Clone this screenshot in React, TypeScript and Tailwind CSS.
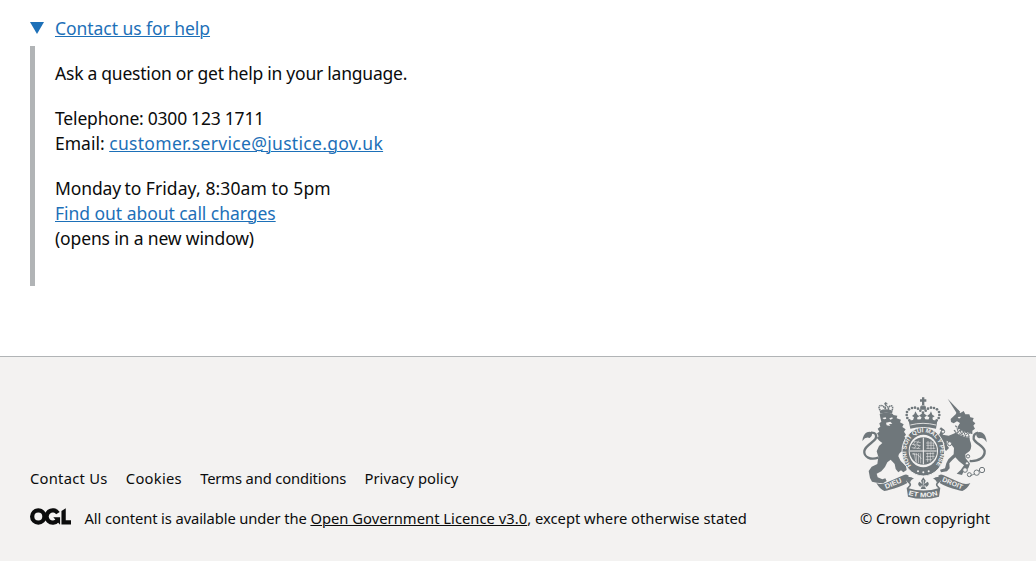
const INK = "#6f777b";
const PAPER = "#f3f2f1";

function OglLogo() {
  return (
    <svg className="mt-px mr-[13.5px] h-[17px] w-[41px] shrink-0" viewBox="0 0 483.2 195.7" aria-hidden="true">
      <circle cx="97.8" cy="97.8" r="72.4" fill="none" stroke="#0b0c0c" strokeWidth="50.7" />
      <path d="M329 59A72.4 72.4 0 1 0 326 141" fill="none" stroke="#0b0c0c" strokeWidth="50.7" />
      <path d="M274.5 105.5h80v87.8h-3zM370.8 32.4 421.5 .1V142.8h61.7v50.7H370.8z" fill="#0b0c0c" />
    </svg>
  );
}

const pearls: [number, number][] = [
  [157, 82], [151, 75], [149, 66], [150, 57], [156, 49], [165, 45], [174, 44], [183, 47], [190, 53],
  [239, 82], [245, 75], [247, 66], [246, 57], [240, 49], [231, 45], [222, 44], [213, 47], [206, 53],
  [198, 59], [198, 67], [198, 75],
];

function CoatOfArms() {
  return (
    <svg className="mr-[5px] h-[102px] w-[125px] translate-x-[2px]" viewBox="15 12 375 306" fill={INK} aria-hidden="true">
      <defs>
        <path id="garter" d="M163 217A51 58 0 1 1 235 217" />
        <path id="scroll" d="M154 305Q199 320 246 305" />
      </defs>

      {/* lion */}
      <path d="M70 62 68 53Q87 45 107 53L105 62Q87 56 70 62z" />
      <path d="M70 52C60 40 71 32 80 41L86 48C82 36 91 33 94 47C99 32 112 38 105 52M86 28V36M82 32H91" fill="none" stroke={INK} strokeWidth="4.5" strokeDasharray="5 1.5" />
      <path d="M68 63Q87 56 108 63L109 66 121 68 119 76 132 80 129 88 140 94 136 102 146 109 141 116 147 125 142 131 150 139 163 144 163 156 151 162 140 157 139 174Q125 178 124 190L131 204 147 220 149 231 139 238 132 232 124 238 116 228 113 213 101 200 91 208Q85 225 73 235L59 242 62 253 76 259 85 256 89 264 78 271 59 269 45 266 39 255 35 234 44 221 61 213 64 191 59 175 66 159 76 150 67 143 59 134 65 130 60 121 67 116 62 107 70 101 67 91 73 86 70 74z" />
      <path d="M76 75 86 73 88 77 81 79zM97 76 106 73 107 77 100 80zM87 89 100 86 106 92 96 94 100 99 89 97z" fill={PAPER} />
      <path d="M42 119Q62 118 56 137C48 150 26 156 22 174C20 192 40 202 64 194" fill="none" stroke={INK} strokeWidth="7" />
      <path d="M46 119Q46 130 38 135Q26 130 16 144Q18 124 30 118Q38 114 46 119z" />

      {/* unicorn */}
      <path d="M272 17 310 57 301 64z" />
      <path d="M303 51 309 61 320 54 325 64 337 64 340 73 350 75 347 84 355 91 349 98 354 107 346 113 346 124 338 121 337 129 339 143Q347 159 338 174L325 184 326 196 339 212 334 226 320 235 315 246 299 242 311 231 321 217 306 205 295 193 286 201 277 211 278 226 270 235 252 238 249 230 264 226 268 211 274 199 290 184 291 165 280 151 269 143 270 157 276 165 267 174 260 164 262 151 254 138 245 128 253 111 247 109 252 103 263 111 257 125 275 128 293 121 301 103 309 90 300 85 290 91 282 87 281 78 296 64z" />
      <path d="M302 72 313 71 306 77z" fill={PAPER} />
      <path d="M294 106Q311 125 339 127" fill="none" stroke={PAPER} strokeWidth="15" />
      <path d="M295 98Q313 118 340 120M291 112Q313 130 338 132" fill="none" stroke={INK} strokeWidth="4" strokeDasharray="6 3" />
      <path d="M300 106 304 118 309 111 314 124 320 116 325 127 332 121 337 130" fill="none" stroke={INK} strokeWidth="3" />
      <path d="M363 119Q348 122 350 138C356 152 380 158 383 174C384 192 366 206 338 204" fill="none" stroke={INK} strokeWidth="7" />
      <path d="M358 121Q356 132 366 136Q380 132 389 148Q388 126 376 119Q366 114 358 121z" />
      <g fill={PAPER} stroke={INK} strokeWidth="3">
        <circle cx="278" cy="152" r="6" />
        <circle cx="258" cy="116" r="5" />
        <circle cx="333" cy="190" r="5" />
        <circle cx="324" cy="231" r="7" />
        <circle cx="337" cy="245" r="6" />
        <circle cx="359" cy="239" r="8" />
        <circle cx="375" cy="231" r="8" />
        <circle cx="330" cy="211" r="5" />
      </g>
      <path d="M339 249 354 242" fill="none" stroke={INK} strokeWidth="2.5" />

      {/* garter and shield */}
      <ellipse cx="199" cy="176" rx="64" ry="73" stroke={PAPER} strokeWidth="3" />
      <ellipse cx="199" cy="174" rx="44" ry="49" fill={PAPER} />
      <circle cx="199" cy="174" r="41" />
      <g fill="none" stroke={PAPER} strokeWidth="1.6">
        <path d="M159 174H239M199 134V214" strokeWidth="3" />
        <path d="M169 145 191 149M165 154 191 158M164 164 190 167M207 150 232 150M208 157 232 157M208 166 235 166M213 144V168M222 143V170M230 149V169" />
        <path d="M173 147 169 154 176 160 170 168M185 143 180 152 187 160 181 168M166 182 172 181 176 205M178 180V209M185 180 184 210M191 181V211M167 184Q184 180 193 198" />
        <path d="M207 182 232 181M207 191 233 190M206 200 225 200M212 179V207M220 178V206M228 178V199" />
      </g>
      <circle cx="183" cy="235" r="3" fill={PAPER} />
      <circle cx="199" cy="238" r="3" fill={PAPER} />
      <circle cx="215" cy="235" r="3" fill={PAPER} />
      <text className="font-['Liberation_Sans'] text-[18px] font-bold" fill={PAPER}>
        <textPath href="#garter" textLength="258" lengthAdjust="spacingAndGlyphs">HONI SOIT QUI MAL Y PENSE</textPath>
      </text>

      {/* royal crown */}
      <path d="M155 83Q198 75 241 83L237 107Q198 97 160 107z" />
      <path d="M160 96Q198 86 237 96" fill="none" stroke={PAPER} strokeWidth="2.5" />
      <path d="M168 82 171 73 165 69 172 63 175 55 181 65 187 70 180 74 182 82zM214 82 217 73 210 69 218 63 222 55 226 65 233 70 226 74 228 82zM190 82 194 73 186 68 198 59 210 68 202 73 206 82z" />
      {pearls.map(([x, y]) => (
        <circle key={`${x}-${y}`} cx={x} cy={y} r="4" />
      ))}
      <path d="M190 50Q187 36 198 35Q210 36 206 50zM195 13H202V19H208V26H202V36H195V26H189V19H195z" />
      <path d="M190 38H207" stroke={PAPER} strokeWidth="1.5" />

      {/* motto scroll */}
      <path d="M58 270Q73 277 91 268L139 247Q149 241 156 249Q142 260 151 270Q137 278 125 282Q97 291 82 294Q69 289 58 270z" />
      <path d="M340 270Q326 277 307 268L260 247Q250 241 243 249Q257 260 248 270Q261 278 273 282Q301 291 316 294Q330 289 340 270z" />
      <path d="M148 252C145 267 160 266 160 275C160 281 151 282 152 288M251 252C254 267 239 266 239 275C239 281 248 282 247 288" fill="none" stroke={INK} strokeWidth="5" />
      <path d="M148 251Q164 250 171 257Q160 260 160 268Q151 266 148 251zM251 251Q235 250 228 257Q238 260 239 268Q248 266 251 251z" />
      <path d="M149 284Q199 301 250 284L246 311Q199 324 153 311z" />
      <g className="font-['Liberation_Sans'] font-bold" fill={PAPER}>
        <text className="text-[21px]" transform="translate(87 288) rotate(-23)" textLength="53" lengthAdjust="spacingAndGlyphs">DIEU</text>
        <text className="text-[20px]" transform="translate(254 264) rotate(23)" textLength="65" lengthAdjust="spacingAndGlyphs">DROIT</text>
        <text className="text-[20px]">
          <textPath href="#scroll" textLength="90" lengthAdjust="spacingAndGlyphs">ET MON</textPath>
        </text>
      </g>
      <path d="M199 253 206 263 202 273 212 266Q220 273 209 281L203 279 207 288H191L195 279 189 281Q179 273 187 266L196 273 192 263z" />
      <path d="M199 261V276M191 279H207" stroke={PAPER} strokeWidth="2" />
    </svg>
  );
}

const link = "text-[#1d70b8] underline decoration-1 underline-offset-[1px]";

export default function App() {
  return (
    <div className="flex h-[561px] flex-col overflow-hidden bg-white font-['Noto_Sans','Open_Sans',sans-serif] text-[#0b0c0c]">
      <main className="ml-[30px] h-[356px] w-[960px] pt-4 text-[17.5px] leading-[25px]">
        <details open>
          <summary className="flex h-[25px] cursor-pointer list-none text-[#1d70b8]">
            <svg className="mt-[6px] mr-[11px] h-3 w-3.5" viewBox="0 0 14 12" aria-hidden="true">
              <path d="M0 0H14L7 12z" fill="#1d70b8" />
            </svg>
            <span className="tracking-[-0.05px] underline decoration-1 underline-offset-[1px]">Contact us for help</span>
          </summary>
          <div className="mt-[5px] h-[240px] border-l-[5px] border-[#b1b4b6] pt-[15px] pl-5">
            <p className="mb-5 tracking-[-0.2px] [word-spacing:-0.2px]">Ask a question or get help in your language.</p>
            <p className="mb-5">
              <span className="tracking-[-0.17px] [word-spacing:-0.3px]">Telephone: 0300 123 1711</span>
              <br />
              Email: <a className={`${link} tracking-[0.31px]`} href="#email">customer.service@justice.gov.uk</a>
            </p>
            <p>
              <span className="tracking-[-0.12px] [word-spacing:-1px]">Monday to</span> <span className="tracking-[0.1px]">Friday, 8:30am to 5pm</span>
              <br />
              <a className={`${link} tracking-[-0.04px]`} href="#charges">Find out about call charges</a>
              <br />
              <span className="tracking-[-0.14px]">(opens in a new window)</span>
            </p>
          </div>
        </details>
      </main>
      <footer className="flex-1 border-t border-[#b1b4b6] bg-[#f3f2f1] pt-10 text-[14.75px] leading-5">
        <div className="ml-[30px] flex h-[131px] w-[960px] items-end justify-between">
          <div>
            <ul className="mb-[19px] flex">
              <li className="mr-[18.3px] tracking-[0.25px]">Contact Us</li>
              <li className="mr-[18.3px] tracking-[0.25px]">Cookies</li>
              <li className="mr-[18.3px] tracking-[-0.14px]">Terms and conditions</li>
              <li className="tracking-[0.05px]">Privacy policy</li>
            </ul>
            <div className="flex h-[21px]">
              <OglLogo />
              <p className="mt-px whitespace-nowrap">
                <span className="tracking-[-0.11px]">All content is available under the </span>
                <a className="tracking-[0.02px] underline decoration-1 underline-offset-[1px]" href="#licence">Open Government Licence v3.0</a>
                , except where otherwise stated
              </p>
            </div>
          </div>
          <a className="flex h-[131px] w-[130px] flex-col items-center justify-between whitespace-nowrap" href="#copyright">
            <CoatOfArms />
            <span>© Crown copyright</span>
          </a>
        </div>
      </footer>
    </div>
  );
}
